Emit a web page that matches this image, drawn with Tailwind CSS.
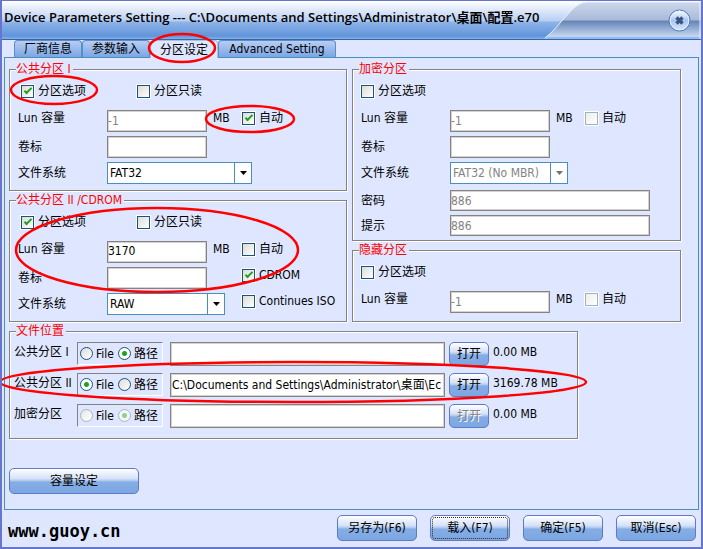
<!DOCTYPE html>
<html lang="zh-CN">
<head>
    <meta charset="UTF-8">
    <meta name="viewport" content="width=device-width, initial-scale=1.0">
    <title>Device Parameters Setting</title>
    <script src="https://cdn.jsdelivr.net/npm/@tailwindcss/browser@4"></script>
</head>
<body class="relative min-h-screen flex flex-col bg-[#dee7ff] border-x-2 border-b-2 border-t border-[#6675ce] text-xs leading-4 text-black font-['DejaVu_Sans_Condensed','Noto_Sans_CJK_SC',sans-serif]">

    <!-- Title bar -->
    <header class="relative h-[39px] flex items-center justify-between border-b border-[#3e659c] bg-linear-[180deg,#ffffff_0%,#e4ecfb_20%,#b9cff2_52%,#8db3e8_56%,#6294da_92%,#7fb0ee_100%]">
        <svg class="absolute right-0 top-0 h-[38px] w-[158px]" viewBox="0 0 158 38" aria-hidden="true">
            <defs>
                <linearGradient id="corner" x1="0" y1="0" x2="0" y2="1">
                    <stop offset="0" stop-color="#cdd7ea"/>
                    <stop offset="0.48" stop-color="#a9bad9"/>
                    <stop offset="0.52" stop-color="#6586b8"/>
                    <stop offset="0.85" stop-color="#b4c6e4"/>
                    <stop offset="0.93" stop-color="#c6d7f5"/>
                    <stop offset="0.95" stop-color="#8fbcf5"/>
                    <stop offset="1" stop-color="#8fbcf5"/>
                </linearGradient>
            </defs>
            <path d="M2 37 C10 31 16 23 24 14 C32 5 37 1 46 1 H158 V38 H0 Z" fill="url(#corner)"/>
            <path d="M2 37 C10 31 16 23 24 14 C32 5 37 1 46 1 H157 V38" fill="none" stroke="#eef4ff"/>
        </svg>
        <h1 class="pl-0.5 pb-1.5 text-[13px] font-semibold whitespace-nowrap font-['Open_Sans','Noto_Sans_CJK_SC',sans-serif]">Device Parameters Setting --- C:\Documents and Settings\Administrator\桌面\配置.e70</h1>
        <button type="button" aria-label="Close" class="relative mr-[10px] size-[23px]">
            <svg viewBox="0 0 23 23" class="size-[23px]" aria-hidden="true">
                <defs>
                    <linearGradient id="close" x1="0" y1="0" x2="0" y2="1">
                        <stop offset="0" stop-color="#ffffff"/>
                        <stop offset="0.5" stop-color="#a9c6f0"/>
                        <stop offset="1" stop-color="#d8e9ff"/>
                    </linearGradient>
                </defs>
                <circle cx="11.5" cy="11.5" r="10.5" fill="url(#close)" stroke="#4f78c4"/>
                <circle cx="11.5" cy="11.5" r="9.3" fill="none" stroke="#e6f0ff"/>
                <path d="M8.5 8.5 L14.5 14.5 M14.5 8.5 L8.5 14.5" stroke="#3b5582" stroke-width="3.4"/>
            </svg>
        </button>
    </header>

    <!-- Tabs -->
    <nav class="flex h-[17px] pl-3" role="tablist">
        <button type="button" role="tab" class="w-[68px] rounded-t border border-b-0 border-[#5a8cc6] bg-linear-to-b from-[#b8cdf4] to-[#7ba6e3]">厂商信息</button>
        <button type="button" role="tab" class="w-[68px] rounded-t border border-b-0 border-[#5a8cc6] bg-linear-to-b from-[#b8cdf4] to-[#7ba6e3]">参数输入</button>
        <button type="button" role="tab" aria-selected="true" class="relative -mb-px w-[68px] rounded-t border border-b-0 border-[#a8c0e8] bg-[#dee7ff]">分区设定</button>
        <button type="button" role="tab" class="w-[118px] rounded-t border border-b-0 border-[#5a8cc6] bg-linear-to-b from-[#b8cdf4] to-[#7ba6e3] whitespace-nowrap">Advanced Setting</button>
    </nav>

    <!-- Tab page -->
    <main class="mx-0.5 grow border border-[#4a8ebd] pl-1 pr-[17px] pt-1 pb-3">
        <div class="grid grid-cols-[338fr_329fr] gap-[5px]">
            <div class="flex flex-col gap-0.5">
                <fieldset class="border border-[#848284] shadow-[1px_1px_0_#fff,inset_1px_1px_0_#fff] px-2 pt-1 pb-1.5">
                    <legend class="h-[14px] leading-[14px] -ml-0.5 pr-0.5 bg-[#dee7ff] text-[#ff0000]">公共分区 I</legend>
                    <div class="flex h-[22px] items-center mb-2 pl-[3px]">
                        <label class="flex items-center gap-1 w-[116px]"><input type="checkbox" checked class="appearance-none size-[13px] shrink-0 border border-[#1c5180] outline outline-white bg-linear-135 from-[#dcdcd7] to-white grid place-content-center checked:before:block checked:before:w-2 checked:before:h-1 checked:before:mb-0.5 checked:before:border-l-2 checked:before:border-b-2 checked:before:border-[#21a121] checked:before:-rotate-45">分区选项</label>
                        <label class="flex items-center gap-1"><input type="checkbox" class="appearance-none size-[13px] shrink-0 border border-[#1c5180] outline outline-white bg-linear-135 from-[#dcdcd7] to-white">分区只读</label>
                    </div>
                    <div class="flex h-[22px] items-start mb-1">
                        <label for="lun1" class="w-[89px]">Lun 容量</label>
                        <input id="lun1" type="text" value="-1" disabled class="w-[100px] h-[22px] border border-[#848284] bg-white shadow-[inset_0_0_0_1px_#d6d3ce] text-[#848284]">
                        <span class="w-[35px] pl-1.5">MB</span>
                        <label class="flex items-center gap-1"><input type="checkbox" checked class="appearance-none size-[13px] shrink-0 border border-[#1c5180] outline outline-white bg-linear-135 from-[#dcdcd7] to-white grid place-content-center checked:before:block checked:before:w-2 checked:before:h-1 checked:before:mb-0.5 checked:before:border-l-2 checked:before:border-b-2 checked:before:border-[#21a121] checked:before:-rotate-45">自动</label>
                    </div>
                    <div class="flex h-[22px] items-center mb-1">
                        <label for="vol1" class="w-[89px]">卷标</label>
                        <input id="vol1" type="text" class="w-[100px] h-[22px] border border-[#848284] bg-white shadow-[inset_0_0_0_1px_#d6d3ce]">
                    </div>
                    <div class="flex h-[22px] items-center">
                        <label for="fs1" class="w-[89px]">文件系统</label>
                        <div class="relative">
                            <select id="fs1" class="block appearance-none w-[145px] h-[22px] border border-[#4a8ebd] bg-white pl-0.5"><option>FAT32</option></select>
                            <span class="absolute right-0 top-0 grid h-[22px] w-[18px] place-content-center border border-[#4a8ebd] pointer-events-none"><svg class="w-[7px] h-1" viewBox="0 0 7 4"><path d="M0 0H7L3.5 4Z"/></svg></span>
                        </div>
                    </div>
                </fieldset>

                <fieldset class="border border-[#848284] shadow-[1px_1px_0_#fff,inset_1px_1px_0_#fff] px-2 pt-1 pb-1.5">
                    <legend class="h-[14px] leading-[14px] -ml-0.5 pr-0.5 bg-[#dee7ff] text-[#ff0000]">公共分区 II /CDROM</legend>
                    <div class="flex h-[22px] items-center mb-2 pl-[3px]">
                        <label class="flex items-center gap-1 w-[116px]"><input type="checkbox" checked class="appearance-none size-[13px] shrink-0 border border-[#1c5180] outline outline-white bg-linear-135 from-[#dcdcd7] to-white grid place-content-center checked:before:block checked:before:w-2 checked:before:h-1 checked:before:mb-0.5 checked:before:border-l-2 checked:before:border-b-2 checked:before:border-[#21a121] checked:before:-rotate-45">分区选项</label>
                        <label class="flex items-center gap-1"><input type="checkbox" class="appearance-none size-[13px] shrink-0 border border-[#1c5180] outline outline-white bg-linear-135 from-[#dcdcd7] to-white">分区只读</label>
                    </div>
                    <div class="flex h-[22px] items-start mb-1">
                        <label for="lun2" class="w-[89px]">Lun 容量</label>
                        <input id="lun2" type="text" value="3170" class="w-[100px] h-[22px] pb-0.5 border border-[#848284] bg-white shadow-[inset_0_0_0_1px_#d6d3ce]">
                        <span class="w-[35px] pl-1.5">MB</span>
                        <label class="flex items-center gap-1"><input type="checkbox" class="appearance-none size-[13px] shrink-0 border border-[#1c5180] outline outline-white bg-linear-135 from-[#dcdcd7] to-white">自动</label>
                    </div>
                    <div class="flex h-[22px] items-start mb-1">
                        <label for="vol2" class="w-[89px] self-center">卷标</label>
                        <input id="vol2" type="text" class="w-[100px] h-[22px] mr-[35px] border border-[#848284] bg-white shadow-[inset_0_0_0_1px_#d6d3ce]">
                        <label class="flex items-center gap-1"><input type="checkbox" checked class="appearance-none size-[13px] shrink-0 border border-[#1c5180] outline outline-white bg-linear-135 from-[#dcdcd7] to-white grid place-content-center checked:before:block checked:before:w-2 checked:before:h-1 checked:before:mb-0.5 checked:before:border-l-2 checked:before:border-b-2 checked:before:border-[#21a121] checked:before:-rotate-45">CDROM</label>
                    </div>
                    <div class="flex h-[22px] items-start">
                        <label for="fs2" class="w-[89px] self-center">文件系统</label>
                        <div class="relative mr-[17px]">
                            <select id="fs2" class="block appearance-none w-[118px] h-[22px] border border-[#4a8ebd] bg-white pl-0.5"><option>RAW</option></select>
                            <span class="absolute right-0 top-0 grid h-[22px] w-[18px] place-content-center border border-[#4a8ebd] pointer-events-none"><svg class="w-[7px] h-1" viewBox="0 0 7 4"><path d="M0 0H7L3.5 4Z"/></svg></span>
                        </div>
                        <label class="flex items-center gap-1 whitespace-nowrap"><input type="checkbox" class="appearance-none size-[13px] shrink-0 border border-[#1c5180] outline outline-white bg-linear-135 from-[#dcdcd7] to-white">Continues ISO</label>
                    </div>
                </fieldset>
            </div>

            <div class="flex flex-col gap-0.5">
                <fieldset class="border border-[#848284] shadow-[1px_1px_0_#fff,inset_1px_1px_0_#fff] px-2 pt-1 pb-1">
                    <legend class="h-[14px] leading-[14px] -ml-0.5 pr-0.5 bg-[#dee7ff] text-[#ff0000]">加密分区</legend>
                    <div class="flex h-[22px] items-center mb-2">
                        <label class="flex items-center gap-1"><input type="checkbox" class="appearance-none size-[13px] shrink-0 border border-[#1c5180] outline outline-white bg-linear-135 from-[#dcdcd7] to-white">分区选项</label>
                    </div>
                    <div class="flex h-[22px] items-start mb-1">
                        <label for="lun3" class="w-[89px]">Lun 容量</label>
                        <input id="lun3" type="text" value="-1" disabled class="w-[100px] h-[22px] border border-[#848284] bg-white shadow-[inset_0_0_0_1px_#d6d3ce] text-[#848284]">
                        <span class="w-[35px] pl-1.5">MB</span>
                        <label class="flex items-center gap-1"><input type="checkbox" disabled class="appearance-none size-[13px] shrink-0 border border-[#9cb2c6] outline outline-white bg-linear-135 from-[#eeeeea] to-white">自动</label>
                    </div>
                    <div class="flex h-[22px] items-center mb-1">
                        <label for="vol3" class="w-[89px]">卷标</label>
                        <input id="vol3" type="text" disabled class="w-[100px] h-[22px] border border-[#848284] bg-white shadow-[inset_0_0_0_1px_#d6d3ce]">
                    </div>
                    <div class="flex h-[22px] items-center mb-1.5">
                        <label for="fs3" class="w-[89px]">文件系统</label>
                        <div class="relative">
                            <select id="fs3" disabled class="block appearance-none w-[118px] h-[22px] border border-[#4a8ebd] bg-white pl-0.5 text-[#848284] opacity-100"><option>FAT32 (No MBR)</option></select>
                            <span class="absolute right-0 top-0 grid h-[22px] w-[18px] place-content-center border border-[#4a8ebd] text-[#737173] pointer-events-none"><svg class="w-[7px] h-1" viewBox="0 0 7 4"><path fill="currentColor" d="M0 0H7L3.5 4Z"/></svg></span>
                        </div>
                    </div>
                    <div class="flex h-[21px] items-center mb-1">
                        <label for="pwd" class="w-[89px]">密码</label>
                        <input id="pwd" type="text" value="886" disabled class="w-[200px] h-[21px] border border-[#848284] bg-white shadow-[inset_0_0_0_1px_#d6d3ce] text-[#848284]">
                    </div>
                    <div class="flex h-[21px] items-center">
                        <label for="hint" class="w-[89px]">提示</label>
                        <input id="hint" type="text" value="886" disabled class="w-[200px] h-[21px] border border-[#848284] bg-white shadow-[inset_0_0_0_1px_#d6d3ce] text-[#848284]">
                    </div>
                </fieldset>

                <fieldset class="border border-[#848284] shadow-[1px_1px_0_#fff,inset_1px_1px_0_#fff] px-2 pt-1 pb-2">
                    <legend class="h-[14px] leading-[14px] -ml-0.5 pr-0.5 bg-[#dee7ff] text-[#ff0000]">隐藏分区</legend>
                    <div class="flex h-[22px] items-center mb-2">
                        <label class="flex items-center gap-1"><input type="checkbox" class="appearance-none size-[13px] shrink-0 border border-[#1c5180] outline outline-white bg-linear-135 from-[#dcdcd7] to-white">分区选项</label>
                    </div>
                    <div class="flex h-[22px] items-start">
                        <label for="lun4" class="w-[89px]">Lun 容量</label>
                        <input id="lun4" type="text" value="-1" disabled class="w-[100px] h-[22px] border border-[#848284] bg-white shadow-[inset_0_0_0_1px_#d6d3ce] text-[#848284]">
                        <span class="w-[35px] pl-1.5">MB</span>
                        <label class="flex items-center gap-1"><input type="checkbox" disabled class="appearance-none size-[13px] shrink-0 border border-[#9cb2c6] outline outline-white bg-linear-135 from-[#eeeeea] to-white">自动</label>
                    </div>
                </fieldset>
            </div>
        </div>

        <!-- File locations -->
        <fieldset class="mt-0.5 max-w-[569px] flex flex-col border border-[#848284] shadow-[1px_1px_0_#fff,inset_1px_1px_0_#fff] px-1 pt-1 pb-2.5">
            <legend class="h-[14px] leading-[14px] ml-0.5 pr-0.5 bg-[#dee7ff] text-[#ff0000]">文件位置</legend>
            <div class="flex h-6 mb-[7px]">
                <label for="path1" class="w-[63px] pt-0.5 whitespace-nowrap">公共分区 I</label>
                <div class="flex items-center w-[86px] h-[23px] mr-[7px] pl-0.5 border border-t-[#848284] border-l-[#848284] border-r-white border-b-white">
                    <label class="flex items-center gap-[3px] w-[38px]"><input type="radio" name="src1" class="appearance-none size-[13px] shrink-0 rounded-full border border-[#1c5180] bg-linear-135 from-[#dcdcd7] to-white">File</label>
                    <label class="flex items-center gap-[3px] whitespace-nowrap"><input type="radio" name="src1" checked class="appearance-none size-[13px] shrink-0 rounded-full border border-[#1c5180] bg-white checked:bg-radial-[circle,#21a121_2px,#fff_3px]">路径</label>
                </div>
                <input id="path1" type="text" class="grow min-w-0 h-6 mr-1 border border-[#848284] bg-white shadow-[inset_0_0_0_1px_#d6d3ce] px-px">
                <button type="button" class="w-10 h-6 rounded-[5px] border border-[#6079cc] bg-linear-[180deg,#ffffff_0%,#d4e1f8_40%,#a9c5ee_50%,#86ade5_54%,#7ba7e2_100%]">打开</button>
                <span class="w-[84px] pl-1 pt-0.5 whitespace-nowrap">0.00 MB</span>
            </div>
            <div class="flex h-6 mb-[7px]">
                <label for="path2" class="w-[63px] pt-0.5 whitespace-nowrap">公共分区 II</label>
                <div class="flex items-center w-[86px] h-[23px] mr-[7px] pl-0.5 border border-t-[#848284] border-l-[#848284] border-r-white border-b-white">
                    <label class="flex items-center gap-[3px] w-[38px]"><input type="radio" name="src2" checked class="appearance-none size-[13px] shrink-0 rounded-full border border-[#1c5180] bg-white checked:bg-radial-[circle,#21a121_2px,#fff_3px]">File</label>
                    <label class="flex items-center gap-[3px] whitespace-nowrap"><input type="radio" name="src2" class="appearance-none size-[13px] shrink-0 rounded-full border border-[#1c5180] bg-linear-135 from-[#dcdcd7] to-white">路径</label>
                </div>
                <input id="path2" type="text" value="C:\Documents and Settings\Administrator\桌面\Ec" class="grow min-w-0 h-6 mr-1 pb-1 border border-[#848284] bg-white shadow-[inset_0_0_0_1px_#d6d3ce] px-px">
                <button type="button" class="w-10 h-6 rounded-[5px] border border-[#6079cc] bg-linear-[180deg,#ffffff_0%,#d4e1f8_40%,#a9c5ee_50%,#86ade5_54%,#7ba7e2_100%]">打开</button>
                <span class="w-[84px] pl-1 pt-0.5 whitespace-nowrap">3169.78 MB</span>
            </div>
            <div class="flex h-6">
                <label for="path3" class="w-[63px] pt-0.5 whitespace-nowrap">加密分区</label>
                <div class="flex items-center w-[86px] h-[23px] mr-[7px] pl-0.5 border border-t-[#848284] border-l-[#848284] border-r-white border-b-white">
                    <label class="flex items-center gap-[3px] w-[38px]"><input type="radio" name="src3" disabled class="appearance-none size-[13px] shrink-0 rounded-full border border-[#a5b6c6] bg-linear-135 from-[#e7e7e2] to-white">File</label>
                    <label class="flex items-center gap-[3px] whitespace-nowrap"><input type="radio" name="src3" checked disabled class="appearance-none size-[13px] shrink-0 rounded-full border border-[#a5b6c6] bg-white checked:bg-radial-[circle,#94cf94_2px,#f4f6f4_3px]">路径</label>
                </div>
                <input id="path3" type="text" disabled class="grow min-w-0 h-6 mr-1 border border-[#848284] bg-white shadow-[inset_0_0_0_1px_#d6d3ce] px-px">
                <button type="button" disabled class="w-10 h-6 rounded-[5px] border border-[#6079cc] bg-linear-[180deg,#ffffff_0%,#d4e1f8_40%,#a9c5ee_50%,#86ade5_54%,#7ba7e2_100%] text-[#848284] text-shadow-[1px_1px_0_#fff]">打开</button>
                <span class="w-[84px] pl-1 pt-0.5 whitespace-nowrap">0.00 MB</span>
            </div>
        </fieldset>

        <button type="button" class="mt-[29px] w-[130px] h-[26px] rounded-[5px] border border-[#6079cc] bg-linear-[180deg,#ffffff_0%,#d4e1f8_40%,#a9c5ee_50%,#86ade5_54%,#7ba7e2_100%]">容量设定</button>
    </main>

    <!-- Bottom bar -->
    <footer class="flex items-start justify-between h-[37px] pt-[5px] pl-1.5 pr-[5px]">
        <a href="#" class="pt-1 text-[17px] leading-6 font-bold font-['DejaVu_Sans_Mono',monospace]">www.guoy.cn</a>
        <div class="flex gap-[13px]">
            <button type="button" class="w-20 h-[26px] rounded-[5px] border border-[#6079cc] bg-linear-[180deg,#ffffff_0%,#d4e1f8_40%,#a9c5ee_50%,#86ade5_54%,#7ba7e2_100%]">另存为(F6)</button>
            <button type="button" class="w-20 h-[26px] rounded-[5px] border border-[#6079cc] outline-1 outline-dotted outline-[#3a2a10] -outline-offset-3 bg-linear-[180deg,#ffffff_0%,#d4e1f8_40%,#a9c5ee_50%,#86ade5_54%,#7ba7e2_100%]">载入(F7)</button>
            <button type="button" class="w-20 h-[26px] rounded-[5px] border border-[#6079cc] bg-linear-[180deg,#ffffff_0%,#d4e1f8_40%,#a9c5ee_50%,#86ade5_54%,#7ba7e2_100%]">确定(F5)</button>
            <button type="button" class="w-20 h-[26px] rounded-[5px] border border-[#6079cc] bg-linear-[180deg,#ffffff_0%,#d4e1f8_40%,#a9c5ee_50%,#86ade5_54%,#7ba7e2_100%]">取消(Esc)</button>
        </div>
    </footer>

    <!-- Red marker rings over the settings to change -->
    <svg class="absolute -left-0.5 -top-px w-[703px] h-[549px] pointer-events-none" viewBox="0 0 703 549" fill="none" stroke="#ff0000" stroke-width="2.5" aria-hidden="true">
        <ellipse cx="182" cy="48" rx="33" ry="14"/>
        <ellipse cx="54" cy="90" rx="43" ry="14"/>
        <ellipse cx="250" cy="119" rx="44" ry="13"/>
        <ellipse cx="157" cy="250" rx="141" ry="42"/>
        <ellipse cx="293" cy="382" rx="293" ry="20"/>
    </svg>
</body>
</html>
